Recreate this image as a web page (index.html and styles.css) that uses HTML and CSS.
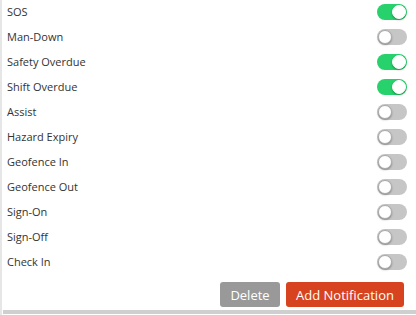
FILE: index.html
```html
<!DOCTYPE html>
<html lang="en">
<head>
    <meta charset="UTF-8">
    <title>Notifications</title>
    <link rel="stylesheet" href="styles.css">
</head>
<body>
    <div class="panel">
        <ul class="alerts">
            <li><span>SOS</span><label class="switch on"><i></i></label></li>
            <li><span>Man-Down</span><label class="switch"><i></i></label></li>
            <li><span>Safety Overdue</span><label class="switch on"><i></i></label></li>
            <li><span>Shift Overdue</span><label class="switch on"><i></i></label></li>
            <li><span>Assist</span><label class="switch"><i></i></label></li>
            <li><span>Hazard Expiry</span><label class="switch"><i></i></label></li>
            <li><span>Geofence In</span><label class="switch"><i></i></label></li>
            <li><span>Geofence Out</span><label class="switch"><i></i></label></li>
            <li><span>Sign-On</span><label class="switch"><i></i></label></li>
            <li><span>Sign-Off</span><label class="switch"><i></i></label></li>
            <li><span>Check In</span><label class="switch"><i></i></label></li>
        </ul>
        <div class="actions">
            <button class="btn btn-delete">Delete</button>
            <button class="btn btn-add">Add Notification</button>
        </div>
    </div>
    <div class="footer-bar"></div>
</body>
</html>
```

FILE: styles.css
```css
* {
    margin: 0;
    padding: 0;
    box-sizing: border-box;
}

body {
    font-family: "Open Sans", sans-serif;
    font-size: 11px;
    color: #333;
    background: #fff;
    width: 416px;
    height: 315px;
    overflow: hidden;
    border-left: 2px solid #e6e6e6;
}

.panel {
    height: 311px;
    padding: 0 9px 0 5px;
}

.alerts {
    list-style: none;
    margin-top: -1px;
}

.alerts li {
    display: flex;
    align-items: center;
    justify-content: space-between;
    height: 25px;
}

.switch {
    position: relative;
    width: 30px;
    height: 16px;
    border-radius: 8px;
    background: #c6c6c6;
}

.switch i {
    position: absolute;
    top: 1px;
    left: 1px;
    width: 14px;
    height: 14px;
    border-radius: 50%;
    background: #fff;
    border: 1px solid #aaa;
    box-shadow: 0 1px 2px rgba(0, 0, 0, 0.3);
}

.switch.on {
    background: #27d16b;
}

.switch.on i {
    left: 15px;
    border-color: #fff;
}

.actions {
    display: flex;
    justify-content: flex-end;
    gap: 6px;
    margin-top: 8px;
    padding-right: 3px;
}

.btn {
    font-family: "Open Sans", sans-serif;
    font-size: 13px;
    color: #fff;
    border: none;
    border-radius: 3px;
    height: 25px;
    padding: 0;
    white-space: nowrap;
}

.btn-delete {
    background: #999;
    width: 60px;
}

.btn-add {
    background: #d6431e;
    width: 118px;
}

.footer-bar {
    height: 4px;
    margin-left: 1px;
    background: #cfcfcf;
}
```
